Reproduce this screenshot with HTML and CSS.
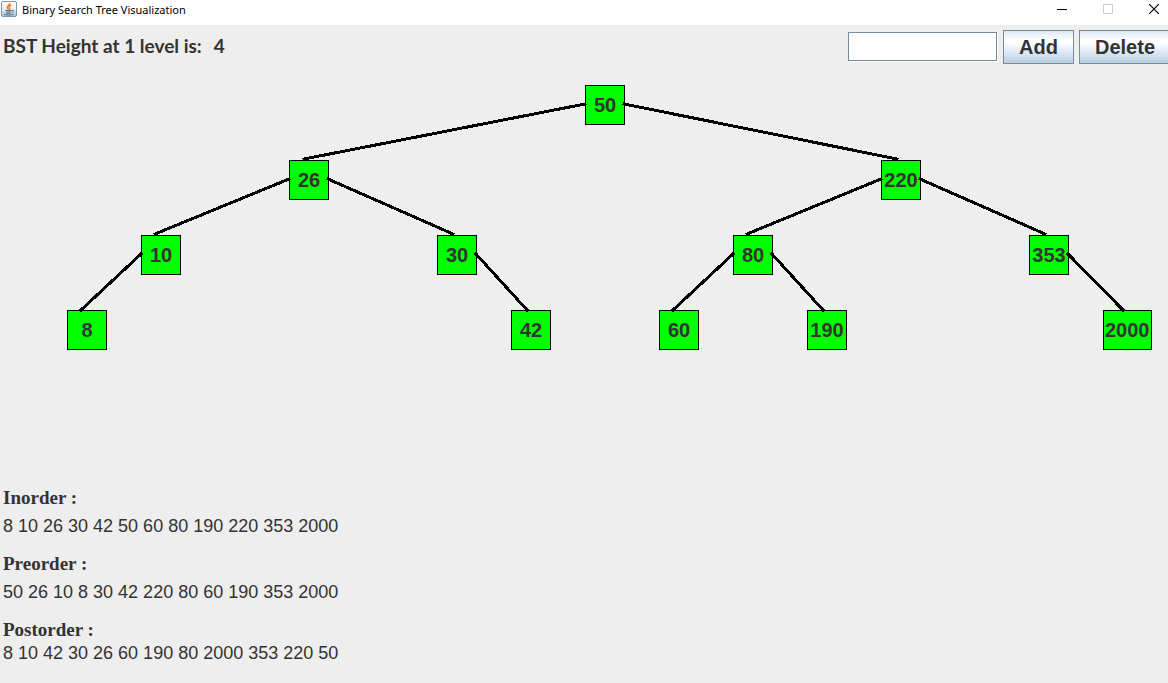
FILE: index.html
```html
<!DOCTYPE html>
<html lang="en">
<head>
<meta charset="utf-8">
<title>Binary Search Tree Visualization</title>
<link rel="stylesheet" href="styles.css">
</head>
<body>
<header class="titlebar">
  <svg class="app-icon" width="16" height="16" viewBox="0 0 16 16" aria-hidden="true">
    <defs><linearGradient id="tile" x1="0" y1="0" x2="0" y2="1"><stop offset="0" stop-color="#ffffff"/><stop offset="0.45" stop-color="#eef2f5"/><stop offset="1" stop-color="#a9bccb"/></linearGradient></defs>
    <rect x="0.5" y="0.5" width="15" height="15" rx="1.5" fill="url(#tile)" stroke="#7d97ab"/>
    <path d="M8.800 2C9.500 4 5.200 4.800 6.400 6.800L7.500 8.600M10.300 4.300C8 5.200 7.600 6.200 8.700 7.300L8.300 8.800" fill="none" stroke="#ee7d26" stroke-width="1.500"/>
    <path d="M4.500 9.500H10.500M5 11H10M5.500 12.300H9.700M10.800 9.300C13.400 8.700 13 10.800 10.700 11.300M3 13.300C5 14.300 10.500 14.300 12.500 13.200" fill="none" stroke="#4b7396"/>
  </svg>
  <h1 class="title">Binary Search Tree Visualization</h1>
  <div class="window-controls">
    <button class="window-button" type="button" aria-label="Minimize"><svg width="10" height="10" viewBox="0 0 10 10" shape-rendering="crispEdges"><path d="M0 5.500H10" stroke="#000"/></svg></button>
    <button class="window-button" type="button" aria-label="Maximize" disabled><svg width="10" height="10" viewBox="0 0 10 10"><path d="M.5.5H9.500V9.500H.5Z" fill="none" stroke="#ccc"/></svg></button>
    <button class="window-button" type="button" aria-label="Close"><svg width="10" height="10" viewBox="0 0 10 10"><path d="M0 0L10 10M10 0L0 10" stroke="#000" stroke-width="1.200"/></svg></button>
  </div>
</header>
<main class="content">
  <div class="toolbar">
    <p class="height-info"><span>BST Height at 1 level is:</span><span>4</span></p>
    <form class="controls">
      <input class="value-input" type="text" aria-label="Node value">
      <button class="action" type="button">Add</button>
      <button class="action action-delete" type="button">Delete</button>
    </form>
  </div>
  <section class="tree" aria-label="Binary search tree">
    <div class="node" style="left:585px;top:15px">50</div>
    <div class="node" style="left:289px;top:90px">26</div>
    <div class="node" style="left:881px;top:90px">220</div>
    <div class="node" style="left:141px;top:165px">10</div>
    <div class="node" style="left:437px;top:165px">30</div>
    <div class="node" style="left:733px;top:165px">80</div>
    <div class="node" style="left:1029px;top:165px">353</div>
    <div class="node" style="left:67px;top:240px">8</div>
    <div class="node" style="left:511px;top:240px">42</div>
    <div class="node" style="left:659px;top:240px">60</div>
    <div class="node" style="left:807px;top:240px">190</div>
    <div class="node" style="left:1103px;top:240px">2000</div>
    <svg class="edges" width="1168" height="290" viewBox="0 0 1168 290" aria-hidden="true">
      <path d="M585 34L304 89M624 34L897 89M289 109L155 164M328 109L453 164M881 109L747 164M920 109L1045 164M141 184L81 240M476 184L527 240M733 184L673 240M772 184L823 240M1068 184L1123 240"/>
    </svg>
  </section>
  <section class="traversals">
    <h2 class="order-name">Inorder :</h2>
    <p class="order-values">8 10 26 30 42 50 60 80 190 220 353 2000</p>
    <h2 class="order-name">Preorder :</h2>
    <p class="order-values">50 26 10 8 30 42 220 80 60 190 353 2000</p>
    <h2 class="order-name">Postorder :</h2>
    <p class="order-values order-values-last">8 10 42 30 26 60 190 80 2000 353 220 50</p>
  </section>
</main>
</body>
</html>
```
FILE: styles.css
```css
* { box-sizing: border-box; }
body {
  margin: 0;
  min-height: 100vh;
  display: flex;
  flex-direction: column;
  overflow-x: hidden;
  background: #eee;
  color: #333;
  font-family: "Liberation Sans", Arial, sans-serif;
}
h1, h2, p { margin: 0; }
.titlebar {
  display: flex;
  height: 25px;
  padding: 1px 0 0 1px;
  background: #fff;
}
.title {
  flex: 1;
  margin-left: 5px;
  font: 11px/18px "Noto Sans", sans-serif;
  color: #000;
}
.window-controls { display: flex; }
.window-button {
  display: flex;
  justify-content: center;
  width: 46px;
  padding: 3px 0 0 18px;
  border: 0;
  background: none;
}
.content { flex: 1; display: flex; flex-direction: column; }
.toolbar {
  display: flex;
  justify-content: space-between;
  align-items: flex-start;
  height: 45px;
  padding: 5px 0 0 3px;
}
.height-info {
  display: flex;
  gap: 12px;
  font: bold 19px/32px Lato, Carlito, Calibri, sans-serif;
}
.controls { display: flex; gap: 5px; margin-right: -3px; }
.value-input {
  width: 149px;
  height: 29px;
  margin: 2px 1px 0 0;
  padding: 0 4px;
  border: 1px solid #7a8a99;
  border-radius: 0;
  box-shadow: 1px 1px #fff;
  background: #fff;
  font: 18px "Liberation Sans", sans-serif;
}
.action {
  width: 71px;
  height: 34px;
  padding: 0;
  border: 1px solid #7a8a99;
  background: linear-gradient(#dde8f3, #fff 30%, #fff 36%, #b8cfe5);
  color: #333;
  font: bold 20px "Liberation Sans", sans-serif;
}
.action-delete { width: 92px; }
.tree { position: relative; flex: 1; min-height: 290px; }
.node {
  position: absolute;
  min-width: 40px;
  height: 40px;
  padding: 0 1px;
  border: 1px solid #000;
  background: #0f0;
  font-size: 20px;
  font-weight: bold;
  line-height: 38px;
  text-align: center;
}
.edges {
  position: absolute;
  inset: 0 auto auto 0;
  fill: none;
  stroke: #000;
  stroke-width: 3px;
  stroke-linecap: square;
  shape-rendering: crispEdges;
  pointer-events: none;
}
.traversals { padding: 0 3px 18px; }
.order-name { font: bold 19px/24px "Liberation Serif", serif; }
.order-values { margin: 4px 0 14px; font-size: 18px; line-height: 24px; }
.order-values-last { margin: -1px 0 0; }
```
